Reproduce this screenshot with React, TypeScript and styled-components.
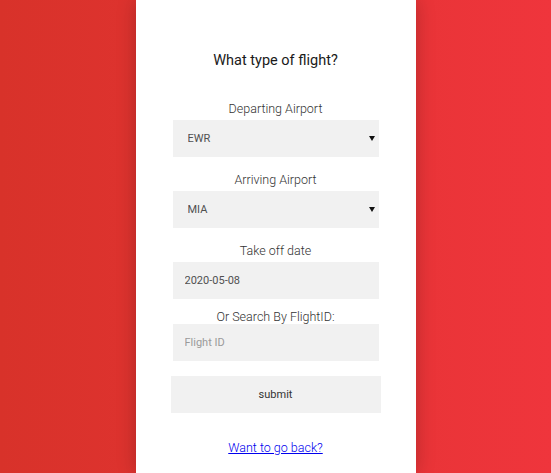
import React from "react";
import styled, { createGlobalStyle } from "styled-components";

const Global = createGlobalStyle`
  html, body { margin: 0; padding: 0; height: 100%; }
  body { font-family: Roboto, "Noto Sans", Arial, sans-serif; }
  #root { min-height: 100vh; }
  * { box-sizing: border-box; }
`;

const Page = styled.div`
  min-height: 100vh;
  background: linear-gradient(to right, #d8322a, #ef353c);
  display: flex;
  justify-content: center;
`;

const Panel = styled.div`
  width: 280px;
  min-height: 100vh;
  background: #ffffff;
  box-shadow: 0 0 18px rgba(0, 0, 0, 0.22);
  display: flex;
  flex-direction: column;
  align-items: center;
  padding-top: 51px;
`;

const Title = styled.h1`
  margin: 0 0 30px;
  font-size: 14.5px;
  line-height: 20px;
  font-weight: 400;
  color: #1a1a1a;
`;

const Form = styled.form`
  display: flex;
  flex-direction: column;
  align-items: center;
  width: 100%;
`;

const Field = styled.div<{ $gap?: number }>`
  display: flex;
  flex-direction: column;
  align-items: center;
  margin-bottom: ${(p) => p.$gap ?? 15}px;
`;

const Label = styled.label<{ $tight?: boolean }>`
  font-size: 12.5px;
  line-height: 16px;
  font-weight: 300;
  color: #333333;
  margin-bottom: ${(p) => (p.$tight ? -1 : 3)}px;
`;

const SelectWrap = styled.div`
  position: relative;
  width: 206px;
  height: 37px;
`;

const Select = styled.select`
  appearance: none;
  -webkit-appearance: none;
  width: 100%;
  height: 100%;
  border: none;
  outline: none;
  background: #f1f1f1;
  padding: 0 15px;
  font-family: Roboto, Arial, sans-serif;
  font-size: 11px;
  color: #505050;
`;

const Arrow = styled.svg`
  position: absolute;
  right: 4px;
  top: 16px;
  width: 6px;
  height: 5px;
  pointer-events: none;
`;

const Input = styled.input`
  width: 206px;
  height: 37px;
  border: none;
  outline: none;
  background: #f1f1f1;
  padding: 0 12px;
  font-family: Roboto, Arial, sans-serif;
  font-size: 11px;
  font-weight: 400;
  color: #505050;
  &::placeholder { color: #9a9a9a; }
`;

const Submit = styled.button`
  width: 210px;
  height: 37px;
  border: none;
  background: #f1f1f1;
  font-family: Roboto, Arial, sans-serif;
  font-size: 11px;
  color: #333333;
  cursor: pointer;
  margin-bottom: 26px;
`;

const BackLink = styled.a`
  font-size: 12.5px;
  font-weight: 300;
  line-height: 17px;
  color: #0000ee;
  text-decoration: underline;
`;

const DropArrow = () => (
  <Arrow viewBox="0 0 6 5">
    <path d="M0 0 H6 L3 5 Z" fill="#111" />
  </Arrow>
);

export default function App() {
  return (
    <>
      <Global />
      <Page>
        <Panel>
          <Title>What type of flight?</Title>
          <Form onSubmit={(e) => e.preventDefault()}>
            <Field>
              <Label>Departing Airport</Label>
              <SelectWrap>
                <Select defaultValue="EWR">
                  <option>EWR</option>
                  <option>JFK</option>
                  <option>LGA</option>
                </Select>
                <DropArrow />
              </SelectWrap>
            </Field>
            <Field>
              <Label>Arriving Airport</Label>
              <SelectWrap>
                <Select defaultValue="MIA">
                  <option>MIA</option>
                  <option>LAX</option>
                  <option>ORD</option>
                </Select>
                <DropArrow />
              </SelectWrap>
            </Field>
            <Field $gap={10}>
              <Label>Take off date</Label>
              <Input type="text" defaultValue="2020-05-08" />
            </Field>
            <Field>
              <Label $tight>Or Search By FlightID:</Label>
              <Input type="text" placeholder="Flight ID" />
            </Field>
            <Submit type="submit">submit</Submit>
          </Form>
          <BackLink href="#">Want to go back?</BackLink>
        </Panel>
      </Page>
    </>
  );
}
